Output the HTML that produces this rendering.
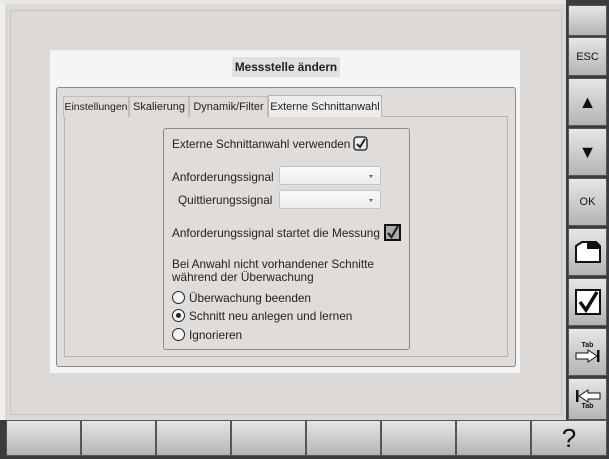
<!DOCTYPE html><html><head><style>
*{box-sizing:border-box;margin:0;padding:0}
body{width:609px;height:459px;background:#3a3d40;position:relative;overflow:hidden;font-family:"Liberation Sans",sans-serif;font-size:11.8px;color:#222;white-space:nowrap}
.a{position:absolute}
.btn{position:absolute;background:linear-gradient(#e6e6e6,#b4b4b4);border:1px solid #555;display:flex;align-items:center;justify-content:center;color:#111}
.t{position:absolute;white-space:nowrap}
.combo{position:absolute;background:linear-gradient(#fafafa,#ececec);border:1px solid #c4c4c4;border-radius:2px}
.combo:after{content:"";position:absolute;right:7px;top:8px;border:2px solid transparent;border-top:3px solid #666}
.rb{position:absolute;width:13px;height:13px;border:1.5px solid #222;border-radius:50%;background:#f4f4f4}
.tab{position:absolute;top:96px;height:21px;background:#dedbd8;border:1px solid #c0bcb8;border-bottom:none;text-align:center;line-height:20px;font-size:11px}
</style></head><body>
<div class="a" style="left:0;top:0;width:568px;height:420px;background:#ddd9d6;border-top:4px solid #e8e6e4;border-left:5px solid #f0efed"></div>
<div class="a" style="left:10px;top:10px;width:552px;height:405px;border:1px solid #c8c4c0"></div>
<div class="a" style="left:50px;top:50px;width:470px;height:323px;background:#f5f5f5"></div>
<div class="a" style="left:232px;top:57px;width:108px;height:20px;background:#e2dfdc;border-radius:2px;font-weight:bold;text-align:center;line-height:20px">Messstelle ändern</div>
<div class="a" style="left:56px;top:87px;width:460px;height:280px;background:#dfdcd9;border:1.5px solid #8a8a8a;border-radius:3px"></div>
<div class="a" style="left:64px;top:116px;width:444px;height:241px;border:1px solid #b8b4b0"></div>
<div class="tab" style="left:63px;width:66px;font-size:10.5px">Einstellungen</div>
<div class="tab" style="left:129px;width:60px">Skalierung</div>
<div class="tab" style="left:189px;width:79px">Dynamik/Filter</div>
<div class="a" style="left:268px;top:95px;width:114px;height:22px;background:#eeecea;border:1px solid #b8b4b0;border-bottom:none;text-align:center;line-height:22px;font-size:11px">Externe Schnittanwahl</div>
<div class="a" style="left:163px;top:128px;width:247px;height:222px;border:1.5px solid #8a8a8a;border-radius:3px"></div>
<div class="t" style="left:172px;top:137px">Externe Schnittanwahl verwenden</div>
<svg class="a" style="left:353px;top:136px" width="15" height="15"><rect x="1" y="1" width="13" height="13" rx="3" fill="#eee" stroke="#333" stroke-width="1.5"/><path d="M4 8 L7 11 L12 3" fill="none" stroke="#222" stroke-width="2"/></svg>
<div class="t" style="left:172px;top:170px">Anforderungssignal</div>
<div class="combo" style="left:279px;top:166px;width:102px;height:19px"></div>
<div class="t" style="left:178px;top:193px">Quittierungssignal</div>
<div class="combo" style="left:279px;top:190px;width:102px;height:19px"></div>
<div class="t" style="left:172px;top:226px">Anforderungssignal startet die Messung</div>
<svg class="a" style="left:384px;top:224px" width="17" height="17"><rect x="1" y="1" width="15" height="15" fill="#aaa" stroke="#111" stroke-width="2"/><path d="M4 9 L7.5 13 L14 2" fill="none" stroke="#222" stroke-width="2.2"/></svg>
<div class="t" style="left:172px;top:257px">Bei Anwahl nicht vorhandener Schnitte</div>
<div class="t" style="left:172px;top:270px">während der Überwachung</div>
<div class="rb" style="left:172px;top:291px"></div><div class="t" style="left:189px;top:291px">Überwachung beenden</div>
<div class="rb" style="left:172px;top:309px"><div class="a" style="left:2.5px;top:2.5px;width:5px;height:5px;border-radius:50%;background:#222"></div></div><div class="t" style="left:189px;top:309px">Schnitt neu anlegen und lernen</div>
<div class="rb" style="left:172px;top:328px"></div><div class="t" style="left:189px;top:328px">Ignorieren</div>
<div class="a" style="left:566px;top:0;width:43px;height:459px;background:#3a3d40"></div>
<div class="btn" style="left:568px;top:5px;width:39px;height:31px"></div>
<div class="btn" style="left:568px;top:37px;width:39px;height:39px;font-size:11px">ESC</div>
<div class="btn" style="left:568px;top:78px;width:39px;height:48px;font-size:18px">▲</div>
<div class="btn" style="left:568px;top:128px;width:39px;height:48px;font-size:18px">▼</div>
<div class="btn" style="left:568px;top:178px;width:39px;height:48px;font-size:11px">OK</div>
<div class="btn" style="left:568px;top:228px;width:39px;height:48px"><svg width="28" height="24"><path d="M2 6 L8 2 L22 2 L26 6 L26 22 L2 22 Z" fill="#fff" stroke="#111" stroke-width="2"/><path d="M13 2 L22 2 L26 6 L26 9 L13 9Z" fill="#111"/></svg></div>
<div class="btn" style="left:568px;top:278px;width:39px;height:48px"><svg width="26" height="26"><rect x="1" y="1" width="24" height="24" fill="#fff" stroke="#111" stroke-width="2"/><path d="M5 13 L11 21 L22 3" fill="none" stroke="#111" stroke-width="3.5"/></svg></div>
<div class="btn" style="left:568px;top:328px;width:39px;height:48px;flex-direction:column"><span style="font-size:7px;font-weight:bold">Tab</span><svg width="26" height="14"><path d="M1 4 H13 V1 L22 7 L13 13 V10 H1 Z" fill="#fff" stroke="#111"/><rect x="22" y="1" width="2.5" height="12" fill="#111"/></svg></div>
<div class="btn" style="left:568px;top:378px;width:39px;height:42px;flex-direction:column"><svg width="26" height="14"><rect x="1" y="1" width="2.5" height="12" fill="#111"/><path d="M25 4 H13 V1 L4 7 L13 13 V10 H25 Z" fill="#fff" stroke="#111"/></svg><span style="font-size:7px;font-weight:bold">Tab</span></div>
<div class="btn" style="left:6px;top:420px;width:75px;height:36px"></div>
<div class="btn" style="left:81px;top:420px;width:75px;height:36px"></div>
<div class="btn" style="left:156px;top:420px;width:75px;height:36px"></div>
<div class="btn" style="left:231px;top:420px;width:75px;height:36px"></div>
<div class="btn" style="left:306px;top:420px;width:75px;height:36px"></div>
<div class="btn" style="left:381px;top:420px;width:75px;height:36px"></div>
<div class="btn" style="left:456px;top:420px;width:75px;height:36px"></div>
<div class="btn" style="left:531px;top:420px;width:76px;height:36px;font-size:26px">?</div>
</body></html>
